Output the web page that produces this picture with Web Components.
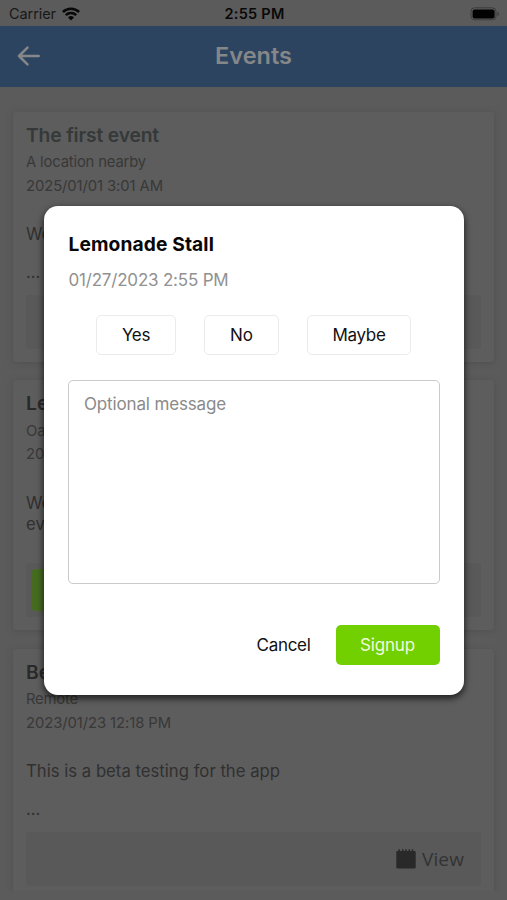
<!DOCTYPE html>
<html lang="en">
<head>
<meta charset="utf-8">
<title>Events</title>
<style>
html, body { margin: 0; height: 900px; overflow: hidden; }
body { font-family: Inter, "Liberation Sans", sans-serif; background: #5b5b5b; }
</style>
</head>
<body>
<events-app></events-app>
<script>
const define = (name, html, setup) => customElements.define(name, class extends HTMLElement {
  connectedCallback() {
    if (this.shadowRoot) return;
    const t = document.createElement('template');
    t.innerHTML = typeof html === 'function' ? html(this) : html;
    this.attachShadow({ mode: 'open' }).append(t.content.cloneNode(true));
    if (setup) setup(this);
  }
});

/* One line of text whose tracking is spread to a given width. */
define('text-line', el => `<style>
  :host { display: block; white-space: nowrap; }
  span { display: inline-block; }
</style><span>${el.getAttribute('text')}</span>`, el => {
  const w = +el.getAttribute('w');
  if (!w) return;
  const s = el.shadowRoot.querySelector('span');
  s.style.letterSpacing = (w - s.getBoundingClientRect().width) / el.getAttribute('text').length + 'px';
});

define('status-bar', `<style>
  :host { display: grid; grid-template-columns: 1fr auto 1fr; align-items: center; height: 25.5px; box-sizing: border-box; padding: 2px 7px 0 9px; font-size: 14.5px; line-height: 24px; color: #181818; background: #5b5b5b; }
  .l { display: flex; gap: 6px; align-items: center; }
  .time { font-weight: 600; color: #090909; }
  .r { justify-self: end; display: flex; }
  svg { display: block; }
</style>
<div class="l"><text-line text="Carrier" w="47"></text-line>
<svg width="18" height="14" viewBox="0 0 18 14" fill="none" stroke="#080808" stroke-width="2.5"><path d="M.9 5a11.6 11.6 0 0 1 16.2 0M3.8 8.1a7.4 7.4 0 0 1 10.4 0"/><path d="M6 10.5a4.3 4.3 0 0 1 6 0L9 13.5z" fill="#080808" stroke="none"/></svg></div>
<text-line class="time" text="2:55 PM" w="60"></text-line>
<div class="r"><svg width="30" height="14" viewBox="0 0 30 14"><rect x="1" y=".8" width="25" height="12" rx="3.5" fill="none" stroke="#3c3c3c"/><rect x="2.6" y="2.4" width="22" height="9" rx="2" fill="#020202"/><path d="M27.5 5v4q1.6-.6 1.6-2t-1.6-2z" fill="#3c3c3c"/></svg></div>`);

define('nav-bar', `<style>
  :host { display: grid; grid-template-columns: 1fr auto 1fr; align-items: center; height: 61px; background: #2d4461; padding: 0 16px; color: #858788; font-size: 23.5px; font-weight: 600; line-height: 30px; }
  svg { display: block; }
</style>
<svg width="26" height="24" viewBox="0 0 26 24" fill="none" stroke="#858788" stroke-width="2.5" stroke-linecap="round" stroke-linejoin="round"><path d="M22.7 12H3M11.5 3.7 3 12l8.5 8.3"/></svg>
<text-line text="Events" w="77"></text-line>`);

define('event-card', el => `<style>
  :host { display: flex; flex-direction: column; height: 250px; flex: none; box-sizing: border-box; padding: 10px 13px 13px 13px; background: #5d5d5d; border-radius: 3px; box-shadow: 0 1px 5px 1px #535353; color: #303030; }
  .title { font-size: 19.3px; font-weight: 600; line-height: 26px; color: ${el.getAttribute('tone') || '#292929'}; }
  .meta { font-size: 14.8px; line-height: 23.5px; color: #383838; }
  .place { margin-top: 3.5px; }
  .body { font-size: 16.7px; line-height: 21px; height: 38px; margin-top: 26px; }
  .dots { font-size: 16.5px; line-height: 21px; }
  .foot { flex: none; margin-top: auto; height: 54px; background: #595959; border-radius: 3px; display: flex; align-items: center; box-sizing: border-box; padding: 0 17px 0 5px; }
</style>
<text-line class="title" text="${el.getAttribute('heading')}" w="${el.getAttribute('hw') || ''}"></text-line>
<text-line class="meta place" text="${el.getAttribute('place')}" w="${el.getAttribute('pw') || ''}"></text-line>
<text-line class="meta" text="${el.getAttribute('date')}" w="${el.getAttribute('dw') || ''}"></text-line>
<div class="body"><slot></slot></div>
<div class="dots"><slot name="more"></slot></div>
<div class="foot"><slot name="foot"></slot></div>`);

define('view-link', `<style>
  :host { display: flex; align-items: center; gap: 6px; margin-left: auto; font: 19px/24px "Open Sans", sans-serif; color: #333; }
  svg { display: block; }
</style>
<svg width="20" height="20" viewBox="0 0 20 20" fill="#292929"><path d="M1.5 2H2.5V.2h1.5V2h2V.2h1.5V2h1.7V.2h1.5V2h1.8V.2H14V2h1.7V.2h1.5V2h1.3q1.2 0 1.2 1.2v15q0 1.2-1.2 1.2h-17q-1.2 0-1.2-1.2v-15Q.3 2 1.5 2z"/></svg>
<text-line text="View" w="42"></text-line>`);

define('choice-button', el => `<style>
  :host { display: flex; align-items: center; justify-content: center; height: 40px; box-sizing: border-box; border: 1.5px solid #ebebeb; border-radius: 5px; font-size: 17px; line-height: 22px; color: #111; background: #fff; }
  :host([kind=primary]) { border: 0; background: #72d000; color: #effbdc; }
  :host([kind=plain]) { border: 0; }
</style><text-line text="${el.getAttribute('text')}" w="${el.getAttribute('w')}"></text-line>`);

define('signup-dialog', `<style>
  :host { display: flex; flex-direction: column; width: 420.5px; height: 488.5px; box-sizing: border-box; padding: 24px 24.5px 29.5px; background: #fff; border-radius: 14px; box-shadow: 0 3px 6px 1px rgba(0,0,0,.6); }
  .title { font-size: 19.2px; font-weight: 650; line-height: 28px; color: #080808; }
  .when { font-size: 17px; line-height: 24px; color: #919191; margin-top: 10px; }
  .title, .when { padding-left: .5px; }
  .choices { display: flex; gap: 28px; margin: 23px 0 24.5px 28px; }
  .msg { flex: none; height: 204px; box-sizing: border-box; border: 1.5px solid #cacaca; border-radius: 5px; padding: 11px 15px; font-size: 17px; line-height: 24px; color: #8a8a8a; }
  .actions { display: flex; justify-content: flex-end; gap: 25px; margin-top: auto; }
</style>
<text-line class="title" text="Lemonade Stall" w="145.5"></text-line>
<text-line class="when" text="01/27/2023 2:55 PM" w="160"></text-line>
<div class="choices">
<choice-button text="Yes" w="28" style="width:80px"></choice-button>
<choice-button text="No" w="23" style="width:75px"></choice-button>
<choice-button text="Maybe" w="53" style="width:104px"></choice-button>
</div>
<div class="msg"><text-line text="Optional message" w="142"></text-line></div>
<div class="actions">
<choice-button kind="plain" text="Cancel" w="54"></choice-button>
<choice-button kind="primary" text="Signup" w="55" style="width:104px"></choice-button>
</div>`);

define('events-app', `<style>
  :host { display: block; position: relative; width: 507px; height: 900px; overflow: hidden; }
  .list { display: flex; flex-direction: column; gap: 18.5px; height: 804px; box-sizing: border-box; padding: 25px 13px 0; overflow: hidden; }
  .green { width: 80px; height: 42px; border-radius: 5px; background: #456b1f; }
  signup-dialog { position: absolute; left: 43.5px; top: 206px; }
</style>
<status-bar></status-bar>
<nav-bar></nav-bar>
<div class="list">
<event-card heading="The first event" hw="133" tone="#353939" place="A location nearby" pw="120" date="2025/01/01 3:01 AM" dw="137">We<span slot="more">...</span></event-card>
<event-card heading="Le" place="Oa" date="20">We<br>ev<div slot="foot" class="green"></div></event-card>
<event-card heading="Be" place="Remote" pw="52" date="2023/01/23 12:18 PM" dw="145"><text-line text="This is a beta testing for the app" w="254"></text-line><span slot="more">...</span><view-link slot="foot"></view-link></event-card>
</div>
<signup-dialog></signup-dialog>`);
</script>
</body>
</html>
